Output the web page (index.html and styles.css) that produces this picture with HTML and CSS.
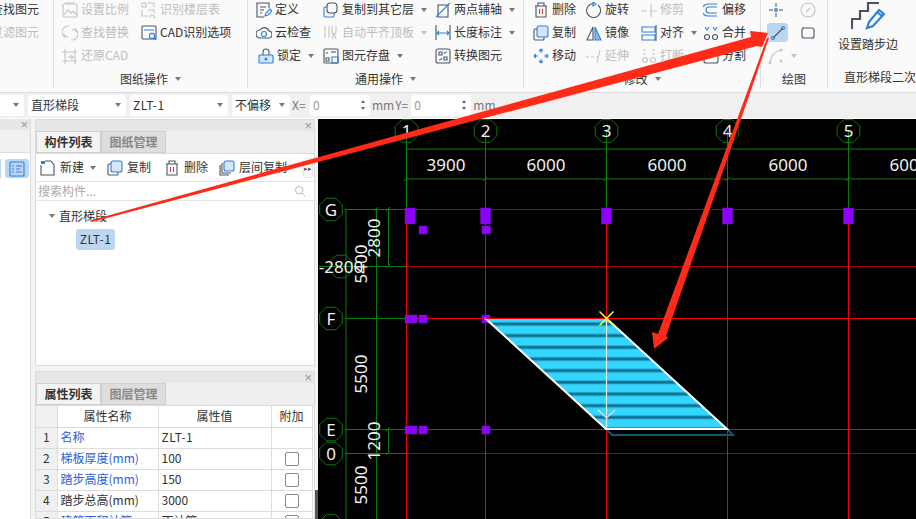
FILE: index.html
```html
<!DOCTYPE html>
<html lang="zh">
<head>
<meta charset="utf-8">
<title>直形梯段</title>
<link rel="stylesheet" href="styles.css">
</head>
<body>
<div class="page">
  <header class="ribbon">
    <section class="group g1">
      <div class="body">
        <div class="tool cut">查找图元</div>
        <div class="tool cut off">过滤图元</div>
      </div>
    </section>
    <section class="group g2">
      <div class="body">
        <div class="tool off"><svg class="ic" viewBox="0 0 16 16"><rect x="1" y="2" width="14" height="13" rx="1"/><path d="M2 13l4-5 3 3 2-2 4 4M3 1h10"/></svg>设置比例</div>
        <div class="tool off"><svg class="ic" viewBox="0 0 16 16"><path d="M1 1h4v4H1zM7 1h6v4M1 8v6h6M7 8h6v3M11 13a2 2 0 1 0 .1 0M13 15l2 1"/></svg>识别楼层表</div>
        <div class="tool off"><svg class="ic" viewBox="0 0 16 16"><path d="M7 1A6 6 0 0 0 3 12M9 15a6 6 0 0 0 4-11M2 9l1 3 3-1M14 7l-1-3-3 1"/></svg>查找替换</div>
        <div class="tool"><svg class="ic" viewBox="0 0 16 16"><rect class="d" x="1" y="1" width="14" height="13" rx="1"/><circle class="b" cx="11" cy="11" r="2.600"/><path class="b" d="M13 13l2 2M3 5h10"/></svg>CAD识别选项</div>
        <div class="tool off"><svg class="ic" viewBox="0 0 16 16"><path d="M0 4h15M0 13h15M3 1v15M13 1v15M6 9h5l-2-2M11 9l-2 2"/></svg>还原CAD</div>
      </div>
      <div class="label">图纸操作<i class="caret"></i></div>
    </section>
    <section class="group g3">
      <div class="body">
        <div class="tool"><svg class="ic" viewBox="0 0 16 16"><path class="d" d="M13 6V1H1v14h7M4 5h6M4 8h4M4 11h2"/><path class="b" d="M9 14l1-3 4-4 2 2-4 4z"/></svg>定义</div>
        <div class="tool"><svg class="ic" viewBox="0 0 16 16"><rect class="b" x="1" y="5" width="10" height="10" rx="1"/><rect class="plain" x="4" y="1" width="10" height="10" rx="3"/></svg>复制到其它层<i class="caret"></i></div>
        <div class="tool"><svg class="ic" viewBox="0 0 16 16"><path class="d" d="M3 3h10v12H3z"/><path class="b" d="M1 15L15 1"/></svg>两点辅轴<i class="caret"></i></div>
        <div class="tool"><svg class="ic" viewBox="0 0 16 16"><path class="d" d="M4 5a5 5 0 0 1 9 1 3.500 3.500 0 0 1-1 7H4a4 4 0 0 1 0-8z"/><circle class="b" cx="8" cy="9" r="2.500"/></svg>云检查</div>
        <div class="tool off"><svg class="ic" viewBox="0 0 16 16"><path d="M2 1v12M6 1v12M9 1v6a2 2 0 0 0 4 0V1M9 14l2-5 2 5"/></svg>自动平齐顶板<i class="caret"></i></div>
        <div class="tool"><svg class="ic" viewBox="0 0 16 16"><path class="d" d="M1 0v15M15 0v15"/><path class="b" d="M2 8h12M4 6L2 8l2 2M12 6l2 2-2 2"/></svg>长度标注<i class="caret"></i></div>
        <div class="tool lock"><svg class="ic" viewBox="0 0 16 16"><path class="d" d="M5 7V4a3 3 0 0 1 6 0v3"/><rect class="tint" x="1" y="7" width="14" height="8" rx="1"/><circle class="dot" cx="8" cy="11" r="1.500"/></svg>锁定<i class="caret"></i></div>
        <div class="tool"><svg class="ic" viewBox="0 0 16 16"><rect class="d" x="1" y="1" width="14" height="14" rx="1"/><path class="d" d="M3 5h2M3 10h3v3H3z"/><rect class="b" x="9" y="9" width="6" height="6"/><path class="d" d="M8 4h5"/></svg>图元存盘<i class="caret"></i></div>
        <div class="tool"><svg class="ic" viewBox="0 0 16 16"><rect class="d" x="1" y="1" width="14" height="14" rx="2"/><path class="d" d="M4 4h3v3H4zM9 9h3v3H9z"/><path class="b" d="M9 6a3 3 0 0 1 3-2M7 10a3 3 0 0 1-3 2"/></svg>转换图元</div>
      </div>
      <div class="label">通用操作<i class="caret"></i></div>
    </section>
    <section class="group g4">
      <div class="body">
        <div class="tool"><svg class="ic" viewBox="0 0 16 16"><path class="d" d="M2 4h12M5 4V1h6v3M3 4v11h10V4"/><path class="red" d="M6.500 7v5M9.500 7v5"/></svg>删除</div>
        <div class="tool"><svg class="ic" viewBox="0 0 16 16"><path class="d" d="M12 3a7 7 0 1 1-5-1.500"/><path class="b" d="M7 0l3 2-3 2z"/></svg>旋转</div>
        <div class="tool off"><svg class="ic" viewBox="0 0 16 16"><path d="M0 9h6M9 9h7M10 2v13"/></svg>修剪</div>
        <div class="tool"><svg class="ic" viewBox="0 0 16 16"><path class="b" d="M14 2H5a5 5 0 0 0 0 12h9M14 5H6a3 3 0 0 0 0 6h8"/></svg>偏移</div>
        <div class="tool"><svg class="ic" viewBox="0 0 16 16"><rect class="d" x="1" y="4" width="10" height="11" rx="1"/><rect class="tint" x="4" y="1" width="11" height="11" rx="2"/></svg>复制</div>
        <div class="tool"><svg class="ic" viewBox="0 0 16 16"><path class="d" d="M1 15L7 2v13z"/><path class="fillb" d="M9 2l6 13H9z"/></svg>镜像</div>
        <div class="tool"><svg class="ic" viewBox="0 0 16 16"><path class="b" d="M1 2h13v5H1zM1 10h13v5H1z"/><path class="d" d="M15 0v16"/></svg>对齐<i class="caret"></i></div>
        <div class="tool"><svg class="ic" viewBox="0 0 16 16"><circle class="d" cx="4" cy="12" r="2.500"/><circle class="d" cx="12" cy="12" r="2.500"/><path class="b" d="M2 2l2 3 2-3M10 2l2 3 2-3"/></svg>合并</div>
        <div class="tool"><svg class="ic" viewBox="0 0 16 16"><path class="b" d="M8 1v4M8 11v4M1 8h4M11 8h4M6 3l2-2 2 2M6 13l2 2 2-2M3 6L1 8l2 2M13 6l2 2-2 2"/></svg>移动</div>
        <div class="tool off"><svg class="ic" viewBox="0 0 16 16"><path d="M0 9h3M5 9h3M10 9h2M14 2l-3 13"/></svg>延伸</div>
        <div class="tool off"><svg class="ic" viewBox="0 0 16 16"><circle cx="4" cy="12" r="2.500"/><circle cx="12" cy="12" r="2.500"/><path d="M2 2h3M2 6h3M11 2h3M11 6h3"/></svg>打断</div>
        <div class="tool"><svg class="ic" viewBox="0 0 16 16"><rect class="d" x="1" y="4" width="14" height="11" rx="2"/></svg>分割</div>
      </div>
      <div class="label">修改<i class="caret"></i></div>
    </section>
    <section class="group g5">
      <div class="body">
        <div class="tool mini"><svg class="ic" viewBox="0 0 16 16"><path class="d" d="M8 1v4M8 11v4M1 8h4M11 8h4"/><circle class="fillb" cx="8" cy="8" r="1.500"/></svg></div>
        <div class="tool mini off"><svg class="ic" viewBox="0 0 16 16"><circle cx="8" cy="8" r="7"/><path d="M6 10l4-4"/></svg></div>
        <div class="tool mini"><span class="sel"><svg class="ic" viewBox="0 0 16 16"><path class="d" d="M3 13L13 3"/><circle class="b" cx="3" cy="13" r="1.500"/><circle class="b" cx="13" cy="3" r="1.500"/></svg></span></div>
        <div class="tool mini"><svg class="ic" viewBox="0 0 16 16"><rect class="d" x="2" y="3" width="12" height="10" rx="2"/><path class="b" d="M2 3h2M14 13h-2"/></svg></div>
        <div class="tool mini off"><svg class="ic" viewBox="0 0 16 16"><path d="M2 15C3 7 7 3 13 2"/><circle cx="2" cy="15" r="1"/><circle cx="13" cy="2" r="1"/><circle cx="13" cy="13" r="1"/></svg><i class="caret"></i></div>
      </div>
      <div class="label">绘图</div>
    </section>
    <section class="group g6">
      <div class="big">
        <svg class="stair" viewBox="0 0 34 28"><path class="sd" d="M1 27V17h8v-8h8V1h11"/><path class="sb" d="M16 26l2-6L28 8l5 4-11 12z"/><path class="sb" d="M26 10l5 4"/></svg>
        <span>设置踏步边</span>
      </div>
      <div class="label">直形梯段二次</div>
    </section>
  </header>

  <div class="optbar">
    <div class="select first"><i class="caret"></i></div>
    <div class="select w98">直形梯段<i class="caret"></i></div>
    <div class="select w98"><span class="code">ZLT-1</span><i class="caret"></i></div>
    <div class="select w58">不偏移<i class="caret"></i></div>
    <span class="xy">X=</span>
    <div class="spin">0<span class="arrows"><i class="up"></i><i class="down"></i></span></div>
    <span class="unit">mm</span>
    <span class="unit">Y=</span>
    <div class="spin">0<span class="arrows"><i class="up"></i><i class="down"></i></span></div>
    <span class="unit">mm</span>
  </div>

  <main class="main">
    <aside class="strip">
      <div class="phead"><span class="x">×</span></div>
      <div class="stripband"></div>
      <div class="striprow">
        <span class="sliver"></span>
        <span class="listbtn"><svg class="ic" viewBox="0 0 16 16"><rect class="b" x="1" y="1" width="14" height="14" rx="1"/><path class="b" d="M3 5h2M7 5h6M3 8h2M7 8h4M3 11h2M7 11h6"/></svg></span>
      </div>
    </aside>

    <div class="side">
      <section class="panel top">
        <div class="phead"><span class="x">×</span></div>
        <div class="tabs"><span class="tab on">构件列表</span><span class="tab">图纸管理</span></div>
        <div class="actions">
          <span class="act new"><svg class="ic" viewBox="0 0 16 16"><path class="d" d="M1 5v10h13V5l-3-4H5"/><path class="sq" d="M1 1h4v3H1z"/></svg>新建<i class="caret"></i></span>
          <span class="act copy"><svg class="ic" viewBox="0 0 16 16"><rect class="d" x="1" y="4" width="10" height="11" rx="1"/><rect class="tint" x="4" y="1" width="11" height="11" rx="2"/></svg>复制</span>
          <span class="act del"><svg class="ic" viewBox="0 0 16 16"><path class="d" d="M2 4h12M5 4V1h6v3M3 4v11h10V4"/><path class="red" d="M6.500 7v5M9.500 7v5"/></svg>删除</span>
          <span class="act layer"><svg class="ic" viewBox="0 0 16 16"><path class="d" d="M1 5v10h9M3 3v10h9"/><rect class="tint" x="5" y="1" width="10" height="10" rx="2"/></svg>层间复制</span>
          <span class="more">▸▸</span>
        </div>
        <div class="search">搜索构件...<svg class="ic mag" viewBox="0 0 16 16"><circle cx="7" cy="7" r="5"/><path d="M11 11l4 4"/></svg></div>
        <div class="tree">
          <div class="node"><i class="tcaret"></i>直形梯段</div>
          <div class="leaf"><span class="code">ZLT-1</span></div>
        </div>
      </section>

      <section class="panel bottom">
        <div class="phead"><span class="x">×</span></div>
        <div class="tabs"><span class="tab on">属性列表</span><span class="tab">图层管理</span></div>
        <table class="props">
          <colgroup><col class="c0"><col class="c1"><col class="c2"><col class="c3"></colgroup>
          <tr><th class="idx"></th><th>属性名称</th><th>属性值</th><th>附加</th></tr>
          <tr><td class="idx">1</td><td class="lnk">名称</td><td><span class="code">ZLT-1</span></td><td></td></tr>
          <tr><td class="idx">2</td><td class="lnk">梯板厚度(mm)</td><td>100</td><td class="ck"><i class="box"></i></td></tr>
          <tr><td class="idx">3</td><td class="lnk">踏步高度(mm)</td><td>150</td><td class="ck"><i class="box"></i></td></tr>
          <tr><td class="idx">4</td><td>踏步总高(mm)</td><td>3000</td><td class="ck"><i class="box"></i></td></tr>
          <tr><td class="idx">5</td><td class="lnk">建筑面积计算</td><td>不计算</td><td class="ck"><i class="box"></i></td></tr>
        </table>
      </section>
    </div>

    <div class="scrolltrack"><span class="thumb"></span></div>

    <div class="canvas">
      <svg class="drawing" viewBox="318 119 598 400">
        <defs>
          <pattern id="treads" patternUnits="userSpaceOnUse" x="0" y="318" width="10" height="11.670">
            <rect width="10" height="11.670" fill="#33d6ff"/>
            <rect y="4" width="10" height="4" fill="#1f9fc4"/>
            <rect y="5" width="10" height="2" fill="#0c6c8c"/>
          </pattern>
          <polygon id="oct" points="-4.700,-11.300 4.700,-11.300 11.300,-4.700 11.300,4.700 4.700,11.300 -4.700,11.300 -11.300,4.700 -11.300,-4.700"/>
        </defs>

        <g class="gline">
          <path d="M406.500 131V209M485.500 131V209M606.500 131V209M727.500 131V209M848.500 131V209"/>
          <path d="M406 149H916M406 179H916"/>
          <path d="M346 209V519M376.500 209V519M388.500 209V266M388.500 429V453"/>
          <path d="M345 209.500H406M319 266.500H406M345 318.500H406M345 429.500H406M345 453.500H406"/>
          <path d="M404 181l4-4M483 181l4-4M604 181l4-4M725 181l4-4M846 181l4-4M374 211l4-4M386 211l4-4M386 268l4-4M374 320l4-4M386 431l4-4M386 455l4-4"/>
        </g>
        <g class="dred">
          <path d="M406 209.500H916M406 266.500H916M406 453.500H916"/>
        </g>
        <g class="rline">
          <path d="M406.500 209V519M485.500 209V519M606.500 209V519M727.500 209V519M848.500 209V519"/>
          <path d="M406 318.500H916M406 429.500H916"/>
        </g>

        <g class="bubble">
          <use href="#oct" x="406.500" y="131"/><use href="#oct" x="485.500" y="131"/><use href="#oct" x="606.500" y="131"/><use href="#oct" x="727.500" y="131"/><use href="#oct" x="848.500" y="131"/>
          <use href="#oct" x="331" y="209.500"/><use href="#oct" x="341" y="266.500"/><use href="#oct" x="331" y="318.500"/><use href="#oct" x="331" y="429.500"/><use href="#oct" x="331" y="453.500"/><use href="#oct" x="331" y="526"/>
        </g>

        <g class="txt mid">
          <text x="406.500" y="137">1</text><text x="485.500" y="137">2</text><text x="606.500" y="137">3</text><text x="727.500" y="137">4</text><text x="848.500" y="137">5</text>
          <text x="331" y="215.500">G</text><text x="331" y="324.500">F</text><text x="331" y="435.500">E</text><text x="331" y="459.500">0</text><text x="331" y="532">O</text>
          <text x="446" y="171">3900</text><text x="546" y="171">6000</text><text x="667" y="171">6000</text><text x="788" y="171">6000</text><text x="909" y="171">6000</text>
          <text x="341" y="272.500">-2800</text>
          <text transform="translate(380 238) rotate(-90)">2800</text>
          <text transform="translate(367 264) rotate(-90)">5400</text>
          <text transform="translate(367 374) rotate(-90)">5500</text>
          <text transform="translate(380 441) rotate(-90)">1200</text>
          <text transform="translate(367 485) rotate(-90)">5500</text>
        </g>

        <g class="purple">
          <rect x="405" y="208" width="10" height="16"/><rect x="480.500" y="208" width="10" height="16"/><rect x="601.500" y="208" width="10" height="16"/><rect x="722.500" y="208" width="10" height="16"/><rect x="843.500" y="208" width="10" height="16"/>
          <rect x="419" y="226" width="8" height="8"/><rect x="482" y="226" width="8.500" height="8"/>
          <rect x="405" y="315" width="12" height="8"/><rect x="419" y="315" width="8" height="8"/><rect x="482" y="315" width="8" height="8"/>
          <rect x="405" y="426" width="12" height="8"/><rect x="419" y="426" width="8" height="8"/><rect x="482" y="426" width="8" height="8"/>
        </g>

        <polyline class="shadow" points="607,430 612,435 733,435 727,429"/>
        <polygon class="stairfill" points="485,318 606,318 727,429 606,429"/>
        <path class="stairedge" d="M485 318L606 429H727L606 318"/>
        <path class="rline" d="M485 318.500H606"/>
        <path class="walk" d="M606.500 318V429M598 410l8.500 8 8.500-8"/>
        <path class="mark" d="M599.500 311.500l14 14M613.500 311.500l-14 14"/>
      </svg>
    </div>
  </main>

  <svg class="arrows-overlay" viewBox="0 0 916 519">
    <polygon points="92,220 751,37 750,31 768,33 762,47 757,46 92,222"/>
    <polygon points="769,38 666,336 668,338 654,349 652,332 658,334 767,38"/>
  </svg>
</div>
</body>
</html>
```

FILE: styles.css
```css
* { box-sizing: border-box; }
html, body { margin: 0; padding: 0; }
body { font: 12px/1.2 "Noto Sans CJK SC", "Liberation Sans", sans-serif; color: #333; background: #fff; }
.page { position: relative; width: 916px; height: 519px; overflow: hidden; display: flex; flex-direction: column; }
i { font-style: normal; }
.code { letter-spacing: .5px; }

/* ribbon */
.ribbon { display: flex; height: 93px; background: #fafafa; border-bottom: 1px solid #dcdcdc; flex: none; }
.group { display: flex; flex-direction: column; border-right: 1px solid #dedede; height: 88px; flex: none; overflow: hidden; }
.body { display: grid; grid-auto-rows: 23px; height: 69px; margin-top: -2px; flex: none; }
.label { height: 23px; padding-top: 1px; display: flex; align-items: center; justify-content: center; white-space: nowrap; flex: none; }
.g1 { width: 54px; }
.g1 .body { grid-template-columns: 1fr; }
.g2 { width: 194px; }
.g2 .body { grid-template-columns: 79px 106px; padding-left: 8px; }
.g3 { width: 276px; }
.g3 .body { grid-template-columns: 67px 112px 80px; padding-left: 8px; }
.g4 { width: 237px; }
.g4 .body { grid-template-columns: 53px 55px 62px 50px; padding-left: 9px; }
.g5 { width: 67px; }
.g5 .body { grid-template-columns: 32px 26px; padding-left: 7px; }
.g6 { width: 88px; border-right: 0; }
.g6 .label { justify-content: flex-start; padding-left: 16px; }

.tool { display: flex; align-items: center; white-space: nowrap; }
.tool.off { color: #bdbdbd; }
.tool.cut { margin-left: -9px; }
.tool.lock { padding-left: 2px; }
.tool.mini { justify-content: flex-start; }

.ic { width: 16px; height: 16px; margin-right: 3px; flex: none; fill: none; stroke: #555; stroke-width: 1.1; }
.off .ic { stroke: #c4c4c4; }
.ic .d { stroke: #4a5560; }
.ic .b { stroke: #2f80dc; }
.ic .red { stroke: #e33; }
.ic .tint { stroke: #2f80dc; fill: #d5e6f9; }
.ic .plain { stroke: #4a5560; fill: #fafafa; }
.ic .dot { stroke: none; fill: #2f80dc; }
.ic .fillb { stroke: #2f80dc; fill: #8fbdea; }
.ic .sq { stroke: none; fill: #2f80dc; }
.mini .ic { margin-right: 0; }
.sel { display: flex; align-items: center; justify-content: center; width: 21px; height: 19px; border-radius: 3px; background: #bcd6f1; margin-left: -1px; }
.caret { display: inline-block; width: 0; height: 0; margin-left: 7px; border: 3.500px solid transparent; border-top: 4px solid #777; border-bottom: 0; }
.off .caret { border-top-color: #c4c4c4; }

.big { height: 65px; display: flex; flex-direction: column; align-items: center; padding: 2px 8px 0 0; flex: none; }
.big span { margin-top: 7px; white-space: nowrap; }
.stair { width: 34px; height: 28px; fill: none; stroke-width: 2.200; }
.sd { stroke: #4a5560; }
.sb { stroke: #2f80dc; }

/* options bar */
.optbar { height: 25px; flex: none; display: flex; align-items: center; gap: 4px; background: #f0f0f0; padding-bottom: 1px; color: #333; }
.select { height: 21px; background: #fff; border-radius: 3px; display: flex; align-items: center; justify-content: space-between; padding: 0 5px 0 3px; white-space: nowrap; }
.select.first { width: 24px; justify-content: flex-end; }
.select.w98 { width: 98px; }
.select.w58 { width: 58px; }
.select .caret { margin-left: 0; }
.xy { color: #777; width: 16px; margin: 0 -2px; }
.unit { color: #777; margin-left: -2px; margin-right: -1px; }
.spin { width: 60px; height: 21px; background: #fff; border-radius: 3px; display: flex; align-items: center; justify-content: space-between; padding: 0 5px 0 3px; color: #999; }
.arrows { display: flex; flex-direction: column; gap: 4px; }
.up, .down { display: block; width: 0; height: 0; border: 2.500px solid transparent; }
.up { border-top: 0; border-bottom: 3px solid #666; }
.down { border-bottom: 0; border-top: 3px solid #666; }

/* main */
.main { flex: 1; min-height: 0; display: flex; background: #f3f3f3; border-top: 1px solid #fff; }
.strip { width: 31px; flex: none; background: #fff; border: 1px solid #ddd; border-width: 0 1px 0 0; }
.stripband { height: 23px; background: #f0f0f0; border-bottom: 1px solid #ddd; }
.striprow { display: flex; padding-top: 6px; gap: 4px; }
.sliver { display: block; width: 1px; height: 19px; background: #bcd6f1; }
.listbtn { display: flex; align-items: center; justify-content: center; width: 24px; height: 19px; background: #bcd6f1; border-radius: 3px; }
.listbtn .ic { margin: 0; }
.phead { height: 11px; background: #e6e6e6; display: flex; justify-content: flex-end; align-items: center; padding-right: 2px; }
.x { color: #999; font: 13px/11px "Liberation Sans", sans-serif; }

.side { width: 280px; margin-left: 4px; flex: none; display: flex; flex-direction: column; gap: 5px; }
.panel { background: #fff; border: 1px solid #dcdcdc; overflow: hidden; }
.panel.top { height: 247px; flex: none; }
.panel.bottom { flex: 1; min-height: 0; }
.tabs { height: 23px; background: #efefef; display: flex; border-bottom: 1px solid #dcdcdc; }
.tab { width: 65px; display: flex; align-items: center; justify-content: center; background: #dedede; color: #888; border: 1px solid #cfcfcf; font-weight: 700; font-size: 12px; }
.tab.on { background: #f3f3f3; color: #333; }
.actions { height: 28px; display: flex; align-items: center; padding-left: 4px; border-bottom: 1px solid #e4e4e4; white-space: nowrap; }
.act { display: flex; align-items: center; }
.act .ic { margin-right: 4px; }
.act .caret { margin-left: 6px; }
.new { width: 67px; }
.copy { width: 57px; }
.del { width: 55px; }
.layer { width: 83px; }
.more { color: #555; font-size: 7px; margin-left: 1px; width: 10px; border: 1px solid #e8e8e8; height: 20px; line-height: 18px; border-radius: 3px; overflow: hidden; }
.search { height: 19px; display: flex; align-items: center; justify-content: space-between; padding: 0 3px 0 2px; color: #aaa; border-bottom: 1px solid #e4e4e4; }
.mag { width: 12px; height: 12px; stroke: #aaa; margin: 0 5px 0 0; }
.tree { padding-top: 6px; }
.node { display: flex; align-items: center; height: 18px; padding-left: 13px; font-size: 12px; }
.tcaret { width: 0; height: 0; margin-right: 4px; border: 3px solid transparent; border-top: 4px solid #777; border-bottom: 0; }
.leaf { width: 39px; height: 21px; margin: 4px 0 0 40px; background: #bcd6f1; border-radius: 3px; display: flex; align-items: center; justify-content: center; }

.props { width: 276px; table-layout: fixed; border-collapse: collapse; }
.c0 { width: 21px; }
.c1 { width: 101px; }
.c2 { width: 113px; }
.c3 { width: 41px; }
.props th, .props td { height: 21px; padding: 0 3px; border: 1px solid #dcdcdc; white-space: nowrap; overflow: hidden; font-weight: 400; text-align: left; }
.props th { text-align: center; }
.props .idx { background: #f0f0f0; text-align: center; padding: 0; border-left: 0; }
.props tr:first-child th { border-top: 0; }
.props .lnk { color: #2a5fd8; }
.props .ck { text-align: center; padding: 0; }
.box { display: inline-block; width: 14px; height: 14px; border: 1px solid #888; border-radius: 2px; vertical-align: middle; }

.scrolltrack { width: 3px; flex: none; background: #f3f3f3; display: flex; align-items: flex-end; }
.thumb { display: block; width: 3px; height: 29px; background: #555; }

/* canvas */
.canvas { flex: 1; min-width: 0; background: #000; }
.drawing { display: block; width: 598px; height: 400px; fill: none; }
.gline path { stroke: #0b7d0b; stroke-width: 1; }
.dred path { stroke: #a80000; stroke-width: 1; }
.rline, .rline path { stroke: #f00000; stroke-width: 1; }
.bubble use { stroke: #0a7a0a; stroke-width: 1; fill: none; }
.txt text { fill: #f0f0f0; font: 17px "Noto Sans", sans-serif; text-anchor: middle; }
.purple rect { fill: #8f00ff; stroke: #6a10b0; stroke-width: .5; }
.shadow { fill: none; stroke: #0b5a70; stroke-width: 2; }
.stairfill { fill: url(#treads); }
.stairedge { fill: none; stroke: #fff; stroke-width: 2; }
.walk { fill: none; stroke: #e8e8e8; stroke-width: 1.200; }
.mark { fill: none; stroke: #ffff20; stroke-width: 1.500; }

.arrows-overlay { position: absolute; left: 0; top: 0; width: 916px; height: 519px; pointer-events: none; }
.arrows-overlay polygon { fill: #ff2a18; }
```
